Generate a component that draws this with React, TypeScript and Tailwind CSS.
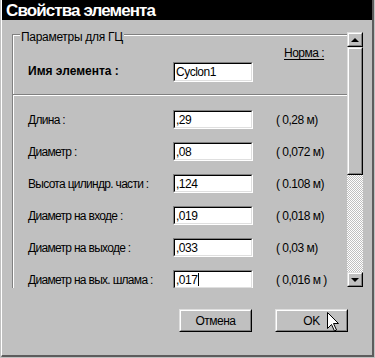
import React from "react";

type Row = { label: string; value: string; norm: string; caret?: boolean };

const ROWS: Row[] = [
  { label: "Длина :", value: ",29", norm: "( 0,28 м)" },
  { label: "Диаметр :", value: ",08", norm: "( 0,072 м)" },
  { label: "Высота цилиндр. части :", value: ",124", norm: "( 0.108 м)" },
  { label: "Диаметр на входе :", value: ",019", norm: "( 0,018 м)" },
  { label: "Диаметр на выходе :", value: ",033", norm: "( 0,03 м)" },
  { label: "Диаметр на вых. шлама :", value: ",017", norm: "( 0,016 м )", caret: true },
];

// sunken white edit box, win95 style
function Field({ value, caret, tall }: { value: string; caret?: boolean; tall?: boolean }) {
  return (
    <div
      className={`w-[80px] ${tall ? "h-[20px]" : "h-[19px]"} border border-t-[#808080] border-l-[#808080] border-r-white border-b-white`}
    >
      <div className="h-full flex items-center pl-[1px] bg-white border border-t-black border-l-black border-r-[#dfdfdf] border-b-[#dfdfdf] text-black">
        <span>{value}</span>
        {caret && <span className="ml-[1px] w-[1px] h-[13px] bg-black" />}
      </div>
    </div>
  );
}

// raised 3d box (buttons, scrollbar parts)
function Raised({ className, children }: { className: string; children?: React.ReactNode }) {
  return (
    <div className={`border border-t-[#dfdfdf] border-l-[#dfdfdf] border-r-black border-b-black ${className}`}>
      <div className="h-full w-full flex items-center justify-center border border-t-white border-l-white border-r-[#808080] border-b-[#808080]">
        {children}
      </div>
    </div>
  );
}

function ScrollBar() {
  return (
    <div className="w-[16px] h-[255px] mt-[4px] flex flex-col shrink-0">
      <Raised className="h-[15px] w-[16px]">
        <div className="w-0 h-0 border-x-[4px] border-x-transparent border-b-[4px] border-b-black" />
      </Raised>
      <Raised className="h-[128px] w-[16px]" />
      <div className="flex-1 bg-[repeating-conic-gradient(#ffffff_0_25%,#c0c0c0_0_50%)] bg-[length:2px_2px]" />
      <Raised className="h-[15px] w-[16px]">
        <div className="w-0 h-0 border-x-[4px] border-x-transparent border-t-[4px] border-t-black" />
      </Raised>
    </div>
  );
}

export default function App() {
  return (
    <div className="w-[375px] h-[358px] bg-[#c0c0c0] pl-[1px] text-[12px] leading-[14px] text-black font-['Liberation_Sans',Arial,sans-serif]">
      <div className="relative w-[373px] h-[357px] flex flex-col border-l border-l-white border-r-2 border-r-[#5c5c5c] border-b-2 border-b-[#5c5c5c]">
        {/* Title bar */}
        <div className="h-[20px] bg-black text-white overflow-hidden pl-[4px] pt-[1px]">
          <span className="text-[17px] leading-[20px] font-bold tracking-[-0.9px]">Свойства элемента</span>
        </div>

        {/* Scrolling panel */}
        <div className="flex ml-[10px] mt-[8px] h-[260px]">
          <div className="w-[335px] h-full overflow-hidden">
            {/* Group box */}
            <div className="relative mt-[6px] w-[360px] h-[400px] border-t border-l border-[#808080]">
              <span className="absolute left-[7px] -top-[5px] bg-[#c0c0c0] px-[1px] tracking-[-0.3px]">
                Параметры для ГЦ
              </span>
              <div className="h-full border-t border-l border-white">
                <div className="mt-[10px] pl-[270px] tracking-[-0.5px]">
                  <span className="underline underline-offset-2">Норма :</span>
                </div>
                <div className="mt-[2px] h-[20px] flex items-center pl-[14px]">
                  <span className="w-[145px] font-bold pb-[3px]">Имя элемента :</span>
                  <div className="tracking-[-0.5px]">
                    <Field value="Cyclon1" tall />
                  </div>
                </div>

                <div className="mt-[12px] -ml-[1px] border-t border-t-[#808080] border-b border-b-white" />

                <div className="mt-[14px] pl-[14px] flex flex-col gap-[13px] tracking-[-0.5px]">
                  {ROWS.map((r) => (
                    <div key={r.label} className="h-[19px] flex items-center">
                      <span className="w-[145px] tracking-[-0.7px]">{r.label}</span>
                      <Field value={r.value} caret={r.caret} />
                      <span className="ml-[23px]">{r.norm}</span>
                    </div>
                  ))}
                </div>
              </div>
            </div>
          </div>
          <ScrollBar />
        </div>

        {/* Footer buttons */}
        <div className="mt-[21px] flex justify-end gap-[23px] pr-[24px] tracking-[-0.5px]">
          <Raised className="w-[73px] h-[23px]">Отмена</Raised>
          <Raised className="w-[73px] h-[23px]">OK</Raised>
        </div>

        {/* mouse pointer over OK */}
        <svg className="absolute left-[325px] top-[312px]" width="12" height="20" viewBox="0 0 12 20">
          <path
            d="M0.5 0.5 L0.5 16.5 L4.5 12.5 L7.5 19 L9.5 18 L6.5 11.5 L11.5 11.5 Z"
            fill="#fff"
            stroke="#000"
            strokeWidth="1"
          />
        </svg>
      </div>
    </div>
  );
}
